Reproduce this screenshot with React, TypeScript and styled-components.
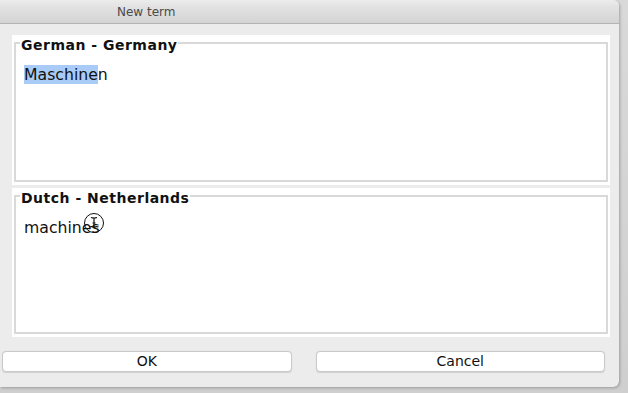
import React from 'react';
import styled, { createGlobalStyle } from 'styled-components';

const GlobalStyle = createGlobalStyle`
  html, body {
    margin: 0;
    padding: 0;
    background: linear-gradient(180deg, #d9d9d9 0%, #cfcfcf 100%);
    overflow: hidden;
  }
  body {
    width: 628px;
    height: 393px;
  }
`;

const Window = styled.div`
  width: 619px;
  height: 387px;
  background: #ececec;
  border-top-right-radius: 6px;
  border-bottom-right-radius: 6px;
  box-shadow: 1px 1px 3px rgba(0, 0, 0, 0.25);
  display: flex;
  flex-direction: column;
  overflow: hidden;
  font-family: 'DejaVu Sans', 'Liberation Sans', sans-serif;
`;

const TitleBar = styled.div`
  height: 23px;
  flex: none;
  display: flex;
  align-items: center;
  padding-left: 117px;
  background: linear-gradient(180deg, #ececec 0%, #e2e2e2 30%, #d4d4d4 100%);
  border-bottom: 1px solid #b3b3b3;
  color: #4a4a4a;
  font-size: 12px;
`;

const Body = styled.div`
  padding: 11px 9px 0 12px;
  display: flex;
  flex-direction: column;
  gap: 3px;
`;

const Panel = styled.div<{ $height: number }>`
  position: relative;
  height: ${(p) => p.$height}px;
  background: #ffffff;
  padding: 0 2px 3px 2px;
  box-sizing: border-box;
  display: flex;
`;

const Field = styled.fieldset`
  flex: 1;
  margin: 0;
  padding: 4px 8px 0 8px;
  border: 2px solid #d9d9d9;
  min-width: 0;
`;

const Legend = styled.legend`
  position: relative;
  top: 2px;
  padding: 0 1px 0 1px;
  margin-left: -4px;
  font-weight: bold;
  font-size: 14px;
  letter-spacing: 0.5px;
  color: #111;
  line-height: 16px;
`;

const TermText = styled.div`
  font-size: 15.7px;
  line-height: 20px;
  color: #111;
  margin-top: 10px;
`;

const Selection = styled.span`
  background: #a9cbf7;
`;

const Buttons = styled.div`
  display: flex;
  gap: 24px;
  padding: 14px 14px 0 2px;
`;

const Button = styled.button`
  flex: 1;
  height: 21px;
  background: #ffffff;
  border: 1px solid #c9c9c9;
  border-radius: 4px;
  box-shadow: 0 0.5px 1px rgba(0, 0, 0, 0.12);
  font-family: 'DejaVu Sans', 'Liberation Sans', sans-serif;
  font-size: 14px;
  color: #111;
  padding: 0;
  line-height: 19px;
`;

const Cursor = styled.svg`
  position: absolute;
  left: 71px;
  top: 24px;
`;

export default function App() {
  return (
    <>
      <GlobalStyle />
      <Window>
        <TitleBar>New term</TitleBar>
        <Body>
          <Panel $height={150}>
            <Field>
              <Legend>German - Germany</Legend>
              <TermText>
                <Selection>Maschine</Selection>n
              </TermText>
            </Field>
          </Panel>
          <Panel $height={149}>
            <Field>
              <Legend>Dutch - Netherlands</Legend>
              <TermText>machines</TermText>
            </Field>
            <Cursor width="22" height="22" viewBox="0 0 22 22">
              <circle cx="11" cy="11" r="9.5" fill="none" stroke="#111" strokeWidth="1" />
              <path d="M8 5.5 Q11 6.5 14 5.5 M11 6 V15.5 M9.5 11 H12.5 M6.5 15 Q9 14 11 15.5 Q13 14 15.5 15" fill="none" stroke="#111" strokeWidth="1.2" />
            </Cursor>
          </Panel>
        </Body>
        <Buttons>
          <Button>OK</Button>
          <Button>Cancel</Button>
        </Buttons>
      </Window>
    </>
  );
}
